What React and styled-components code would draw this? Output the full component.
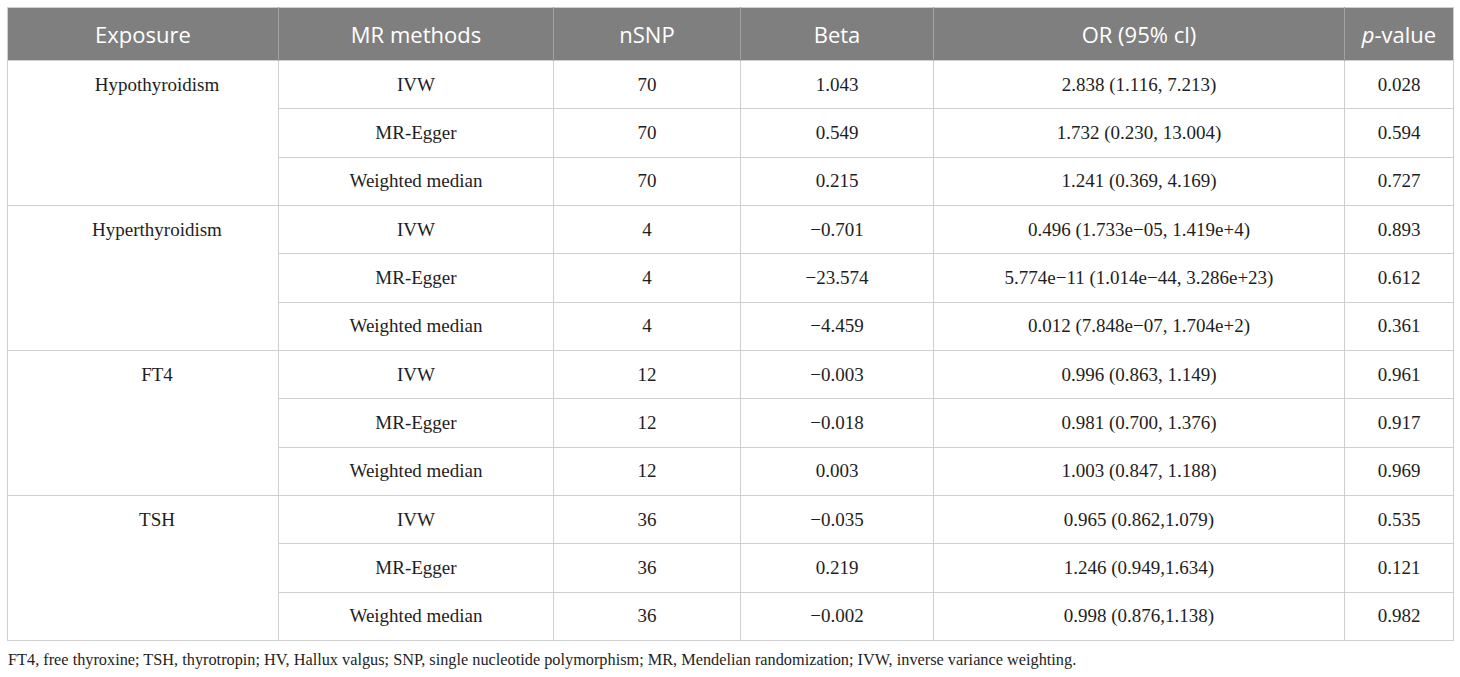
import React from 'react';
import styled, { createGlobalStyle } from 'styled-components';

const GlobalStyle = createGlobalStyle`
  html, body {
    margin: 0;
    padding: 0;
    background: #fff;
  }
  body {
    padding: 7px 7px 0 7px;
    font-family: "Liberation Serif", "Times New Roman", serif;
  }
`;

const rows = [
  {
    exposure: 'Hypothyroidism',
    items: [
      ['IVW', '70', '1.043', '2.838 (1.116, 7.213)', '0.028'],
      ['MR-Egger', '70', '0.549', '1.732 (0.230, 13.004)', '0.594'],
      ['Weighted median', '70', '0.215', '1.241 (0.369, 4.169)', '0.727'],
    ],
  },
  {
    exposure: 'Hyperthyroidism',
    items: [
      ['IVW', '4', '\u22120.701', '0.496 (1.733e\u221205, 1.419e+4)', '0.893'],
      ['MR-Egger', '4', '\u221223.574', '5.774e\u221211 (1.014e\u221244, 3.286e+23)', '0.612'],
      ['Weighted median', '4', '\u22124.459', '0.012 (7.848e\u221207, 1.704e+2)', '0.361'],
    ],
  },
  {
    exposure: 'FT4',
    items: [
      ['IVW', '12', '\u22120.003', '0.996 (0.863, 1.149)', '0.961'],
      ['MR-Egger', '12', '\u22120.018', '0.981 (0.700, 1.376)', '0.917'],
      ['Weighted median', '12', '0.003', '1.003 (0.847, 1.188)', '0.969'],
    ],
  },
  {
    exposure: 'TSH',
    items: [
      ['IVW', '36', '\u22120.035', '0.965 (0.862,1.079)', '0.535'],
      ['MR-Egger', '36', '0.219', '1.246 (0.949,1.634)', '0.121'],
      ['Weighted median', '36', '\u22120.002', '0.998 (0.876,1.138)', '0.982'],
    ],
  },
];

// column widths taken from the source layout
const widths = [271, 275, 187, 193, 411, 109];

const App = () => (
  <>
    <GlobalStyle />
    <Table>
      <colgroup>
        {widths.map((w, i) => (
          <col key={i} style={{ width: w }} />
        ))}
      </colgroup>
      <thead>
        <tr>
          <Th>Exposure</Th>
          <Th>MR methods</Th>
          <Th>nSNP</Th>
          <Th>Beta</Th>
          <Th>OR (95% cl)</Th>
          <Th><em>p</em>-value</Th>
        </tr>
      </thead>
      <tbody>
        {rows.map((group) =>
          group.items.map((cells, i) => (
            <Row key={group.exposure + i}>
              {i === 0 && (
                <ExposureCell rowSpan={3}>{group.exposure}</ExposureCell>
              )}
              {cells.map((c, j) => (
                <Td key={j}>{c}</Td>
              ))}
            </Row>
          ))
        )}
      </tbody>
    </Table>
    <Footnote>
      FT4, free thyroxine; TSH, thyrotropin; HV, Hallux valgus; SNP, single nucleotide polymorphism; MR, Mendelian randomization; IVW, inverse variance weighting.
    </Footnote>
  </>
);

export default App;

const Table = styled.table`
  width: 1446px;
  border-collapse: collapse;
  table-layout: fixed;
  border: 1px solid #cfcfcf;
`;

const Th = styled.th`
  height: 52px;
  padding: 0 8px;
  background: #7f7f7f;
  color: #fff;
  font-family: "Open Sans", "Liberation Sans", sans-serif;
  font-weight: 400;
  font-size: 22px;
  text-align: center;
  vertical-align: middle;
  border-left: 1px solid #a2a2a2;

  &:first-child {
    border-left: none;
  }

  em {
    font-style: italic;
  }
`;

const Row = styled.tr`
  height: 48.33px;
`;

const Td = styled.td`
  padding: 0 8px;
  color: #1e1e1e;
  font-size: 19px;
  text-align: center;
  vertical-align: middle;
  border: 1px solid #cfcfcf;
  white-space: nowrap;
`;

const ExposureCell = styled(Td)`
  vertical-align: top;
  padding-top: 13px;
  padding-left: 36px;
`;

const Footnote = styled.p`
  margin: 8px 0 0 1px;
  font-size: 16.3px;
  line-height: 22px;
  color: #1e1e1e;
`;
